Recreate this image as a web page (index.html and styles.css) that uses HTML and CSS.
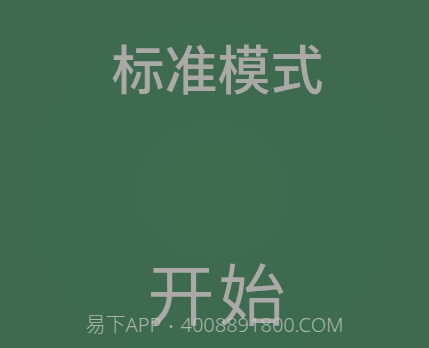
FILE: index.html
```html
<!DOCTYPE html>
<html lang="zh">
<head>
<meta charset="utf-8">
<link rel="stylesheet" href="styles.css">
</head>
<body>
<main class="screen">
  <h1 class="title">标准模式</h1>
  <div class="start">开始</div>
  <div class="watermark">易下APP<span class="dot">•</span>4008891800.COM</div>
</main>
</body>
</html>
```
FILE: styles.css
```css
html, body {
  margin: 0;
  padding: 0;
  width: 429px;
  height: 348px;
  overflow: hidden;
  background: #3e6b4f;
}
.screen {
  position: relative;
  width: 429px;
  height: 348px;
  display: flex;
  flex-direction: column;
  align-items: center;
  background: radial-gradient(ellipse at 50% 55%, #3e6c4f 0%, #3e6a4f 60%, #3f684f 100%);
  font-family: "Noto Sans CJK SC", "Noto Sans", sans-serif;
  color: #aaa9a5;
}
.title {
  margin: 41px 0 0 0;
  padding-left: 6px;
  font-size: 53px;
  line-height: 1;
  font-weight: 500;
  letter-spacing: 0;
}
.start {
  margin-top: 163px;
  padding-left: 8px;
  font-size: 67px;
  line-height: 1;
  font-weight: 400;
  letter-spacing: 4px;
}
.watermark {
  position: absolute;
  left: 0;
  right: 0;
  top: 313px;
  text-align: center;
  font-family: "Noto Sans", "Noto Sans CJK SC", sans-serif;
  font-size: 20px;
  line-height: 24px;
  color: rgba(200, 206, 200, 0.8);
  font-weight: 300;
  padding-left: 0;
}
.dot {
  padding: 0 7px;
  font-size: 14px;
}
```
